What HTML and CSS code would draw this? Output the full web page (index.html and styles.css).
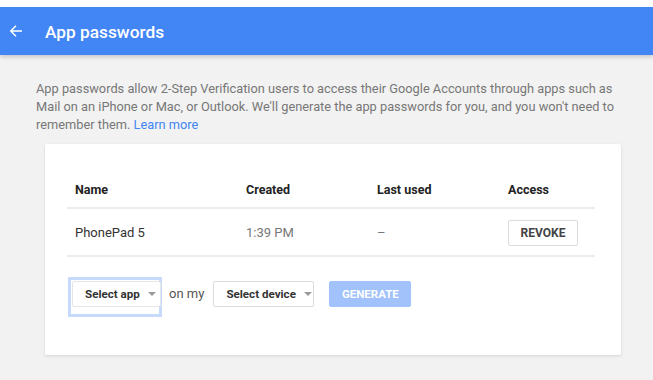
FILE: index.html
```html
<!DOCTYPE html>
<html>
<head>
<meta charset="utf-8">
<link rel="stylesheet" href="styles.css">
</head>
<body>
<div class="top-strip"></div>
<header class="appbar">
  <svg class="back" width="14" height="14" viewBox="0 0 14 14"><path d="M13 7H2M7 1.8L1.8 7L7 12.2" fill="none" stroke="#fff" stroke-width="1.5"/></svg>
  <h1 class="title">App passwords</h1>
</header>
<main class="content">
  <p class="intro">App passwords allow 2-Step Verification users to access their Google Accounts through apps such as Mail on an iPhone or Mac, or Outlook. We'll generate the app passwords for you, and you won't need to remember them. <span class="link">Learn more</span></p>
  <section class="card">
    <div class="table">
      <div class="row head">
        <div class="c c1">Name</div>
        <div class="c c2">Created</div>
        <div class="c c3">Last used</div>
        <div class="c c4">Access</div>
      </div>
      <div class="row body">
        <div class="c c1 name">PhonePad 5</div>
        <div class="c c2 muted">1:39 PM</div>
        <div class="c c3 muted">–</div>
        <div class="c c4"><button class="btn revoke">REVOKE</button></div>
      </div>
    </div>
    <div class="controls">
      <div class="focus-ring"><button class="btn select app"><span>Select app</span><span class="caret"></span></button></div>
      <span class="onmy">on my</span>
      <button class="btn select device"><span>Select device</span><span class="caret"></span></button>
      <button class="btn generate">GENERATE</button>
    </div>
  </section>
</main>
</body>
</html>
```
FILE: styles.css
```css
* { box-sizing: border-box; }
html, body { margin: 0; padding: 0; }
body {
  width: 653px;
  height: 380px;
  overflow: hidden;
  background: #f2f2f2;
  font-family: Roboto, "Liberation Sans", Arial, sans-serif;
}
.top-strip { height: 7px; background: #fff; }
.appbar {
  height: 48px;
  background: #4285f4;
  display: flex;
  align-items: center;
  padding-left: 9px;
  box-shadow: 0 2px 4px rgba(0,0,0,0.18);
  position: relative;
}
.back { margin-right: 22px; }
.title {
  margin: 0;
  padding-top: 2px;
  color: #fff;
  font-size: 17.3px;
  font-weight: 500;
}
.content { padding: 25px 0 0 36px; }
.intro {
  margin: 0;
  width: 590px;
  font-size: 12.8px;
  line-height: 18px;
  color: #777;
}
.link { color: #4285f4; }
.card {
  margin: 10px 0 0 9px;
  width: 576px;
  height: 211px;
  background: #fff;
  border-radius: 2px;
  box-shadow: 0 1px 3px rgba(0,0,0,0.13);
  padding: 28px 26px 0 22px;
}
.row { display: flex; align-items: center; border-bottom: 2px solid #ececec; }
.row.head { height: 37px; font-weight: 700; font-size: 12.5px; color: #222; }
.row.body { height: 48px; font-size: 13px; }
.c { padding-left: 8px; }
.c1 { width: 171px; }
.c2 { width: 131px; }
.c3 { width: 132px; }
.c4 { width: 94px; padding-left: 7px; }
.name { color: #333; }
.muted { color: #777; }
.btn {
  font-family: Roboto, "Liberation Sans", Arial, sans-serif;
  font-weight: 700;
  font-size: 12px;
  color: #444;
  background: #fff;
  border: 1px solid #dcdcdc;
  border-radius: 2px;
  height: 26px;
  padding: 0;
  white-space: nowrap;
  cursor: pointer;
}
.revoke { width: 70px; margin-top: 1px; }
.controls {
  display: flex;
  align-items: flex-start;
  padding-top: 20px;
}
.focus-ring {
  margin-left: 1px;
  width: 94px;
  height: 40px;
  border: 3px solid #c6dafc;
  padding: 1px 0 0 1px;
}
.select {
  display: flex;
  align-items: center;
  padding-left: 12px;
  font-size: 11.6px;
  font-weight: 700;
  color: #333;
}
.app { width: 89px; height: 26px; border-color: #e6e6e6; }
.caret {
  display: inline-block;
  width: 0; height: 0;
  border-left: 4px solid transparent;
  border-right: 4px solid transparent;
  border-top: 4px solid #999;
  margin-left: 8px;
}
.onmy {
  margin: 9px 0 0 7px;
  font-size: 13px;
  color: #555;
}
.device { margin: 4px 0 0 9px; width: 101px; }
.generate {
  margin: 4px 0 0 15px;
  width: 82px;
  background: #a1c2fa;
  border-color: #a1c2fa;
  color: #fff;
  font-size: 11.5px;
}
```
